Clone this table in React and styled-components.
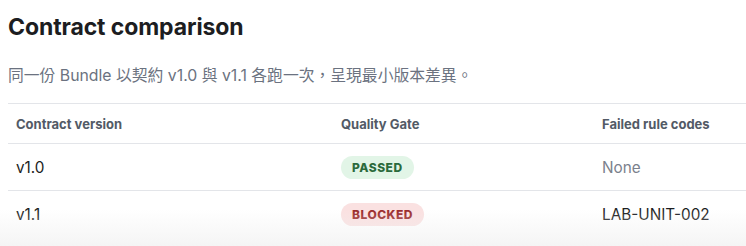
import React from "react";
import styled, { createGlobalStyle } from "styled-components";

const Global = createGlobalStyle`
  html, body { margin: 0; padding: 0; background: #ffffff; }
  body { font-family: Inter, "Noto Sans CJK TC", "Noto Sans", sans-serif; -webkit-font-smoothing: antialiased; }
`;

const Page = styled.div`
  position: relative;
  width: 746px;
  height: 246px;
  overflow: hidden;
  padding: 0 0 0 8px;
  box-sizing: border-box;
`;

const Title = styled.h2`
  margin: 0;
  padding-top: 13px;
  font-size: 23px;
  line-height: 28px;
  font-weight: 700;
  color: #1c1d21;
  letter-spacing: -0.1px;
`;

const Subtitle = styled.p`
  margin: 25px 0 0;
  font-size: 15.8px;
  line-height: 20px;
  color: #6b7280;
`;

const Table = styled.div`
  margin-top: 17px;
  display: grid;
  grid-template-columns: 325px 261px 1fr;
`;

const Row = styled.div`
  display: contents;
`;

const HeadCell = styled.div`
  border-top: 1px solid #e3e5e9;
  height: 39px;
  padding: 0 8px;
  display: flex;
  align-items: center;
  font-size: 13px;
  font-weight: 700;
  color: #525a66;
`;

const Cell = styled.div`
  border-top: 1px solid #e3e5e9;
  height: 46px;
  padding: 0 8px;
  display: flex;
  align-items: center;
  font-size: 15.3px;
  color: ${(p) => (p.$muted ? "#7b818c" : "#1c1d21")};
`;

const Badge = styled.span`
  display: inline-flex;
  align-items: center;
  height: 23px;
  padding: 0 11px;
  border-radius: 999px;
  font-size: 12px;
  font-weight: 800;
  letter-spacing: 0.5px;
  background: ${(p) => (p.$tone === "ok" ? "#e2f5e7" : "#fae1e1")};
  color: ${(p) => (p.$tone === "ok" ? "#2b6a3c" : "#9a2b2b")};
`;

const Fade = styled.div`
  position: absolute;
  left: 0;
  right: 0;
  bottom: 0;
  height: 36px;
  pointer-events: none;
  background: linear-gradient(to bottom, rgba(255,255,255,0), rgba(240,240,240,0.7));
`;

const rows = [
  { v: "v1.0", gate: "PASSED", tone: "ok", codes: "None", muted: true },
  { v: "v1.1", gate: "BLOCKED", tone: "bad", codes: "LAB-UNIT-002", muted: false },
];

export default function App() {
  return (
    <Page>
      <Global />
      <Title>Contract comparison</Title>
      <Subtitle>同一份 Bundle 以契約 v1.0 與 v1.1 各跑一次，呈現最小版本差異。</Subtitle>
      <Table>
        <Row>
          <HeadCell>Contract version</HeadCell>
          <HeadCell>Quality Gate</HeadCell>
          <HeadCell>Failed rule codes</HeadCell>
        </Row>
        {rows.map((r) => (
          <Row key={r.v}>
            <Cell>{r.v}</Cell>
            <Cell>
              <Badge $tone={r.tone}>{r.gate}</Badge>
            </Cell>
            <Cell $muted={r.muted}>{r.codes}</Cell>
          </Row>
        ))}
      </Table>
      <Fade />
    </Page>
  );
}
